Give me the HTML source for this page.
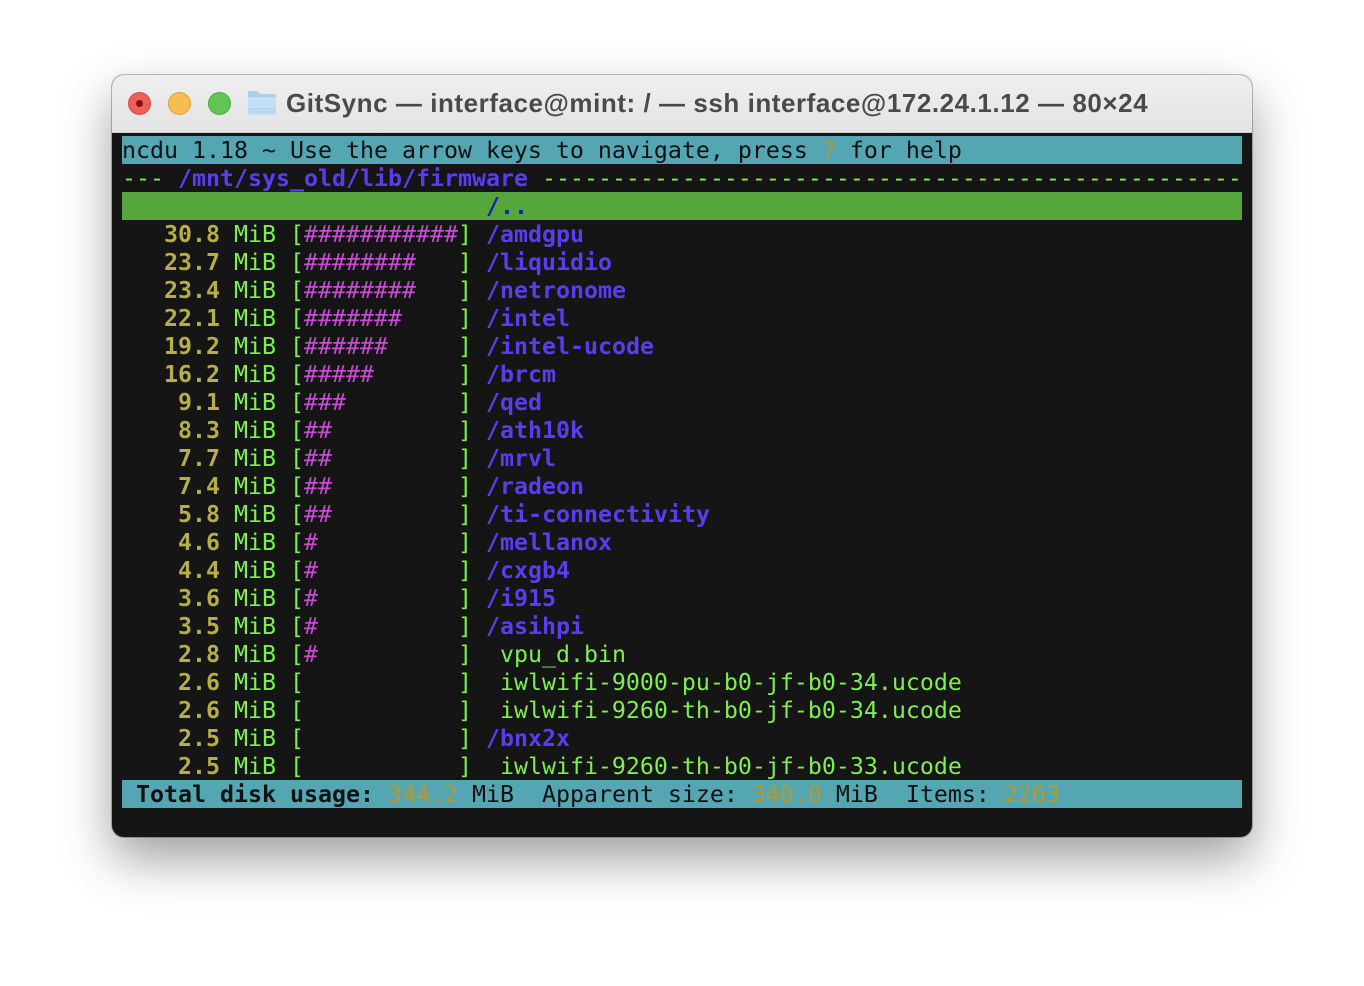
<!DOCTYPE html>
<html><head><meta charset="utf-8"><style>
html,body{margin:0;padding:0;background:#fff;width:1364px;height:986px;overflow:hidden}
.win{position:absolute;left:112px;top:75px;width:1140px;height:762px;border-radius:12px;background:#151515;box-shadow:0 22px 50px rgba(0,0,0,.38),0 0 0 1px rgba(0,0,0,.25);overflow:hidden}
.tb{position:absolute;left:0;top:0;width:1140px;height:57px;background:linear-gradient(#f0efef,#e4e3e3);border-bottom:1px solid #cfcfcf}
.dot{position:absolute;top:17px;width:23px;height:23px;border-radius:50%}
.title{position:absolute;left:174px;top:13px;font:bold 26px "Liberation Sans",sans-serif;color:#4a4a4a;white-space:nowrap;letter-spacing:0.55px}
.term{position:absolute;left:10px;top:61px;width:1120px;overflow:hidden;font-family:"DejaVu Sans Mono","Liberation Mono",monospace;font-size:23.25px}
.l{height:28px;line-height:30px;white-space:pre;color:#7ef04d;overflow:hidden}
.cy{background:#54a6b3;color:#111}
.gr{background:#55a63b}
.y{color:#b7ae48;font-weight:bold}
.b{color:#5a3df0;font-weight:bold}
.m{color:#c84bd6}
.db{color:#1d1fb8;font-weight:bold}
.yy{color:#b59a2a}
</style></head><body>
<div class="win">
<div class="tb">
<div class="dot" style="left:16px;background:#ee5f57;border:1px solid #d44a43;box-sizing:border-box"><div style="position:absolute;left:7px;top:7px;width:7px;height:7px;border-radius:50%;background:#7d1410"></div></div>
<div class="dot" style="left:56px;background:#f6be4f;border:1px solid #dba33b;box-sizing:border-box"></div>
<div class="dot" style="left:96px;background:#61c554;border:1px solid #4ea942;box-sizing:border-box"></div>
<svg style="position:absolute;left:135px;top:14px" width="30" height="27" viewBox="0 0 30 27"><path d="M1 4 Q1 2 3 2 H10 L13 5 H27 Q29 5 29 7 V24 Q29 26 27 26 H3 Q1 26 1 24 Z" fill="#a9cff0"/><path d="M1 8 H29 V24 Q29 26 27 26 H3 Q1 26 1 24 Z" fill="#c3def5"/><path d="M2 20 H28 M2 23 H28" stroke="#a9cbe8" stroke-width="1"/></svg>
<div class="title">GitSync — interface@mint: / — ssh interface@172.24.1.12 — 80×24</div>
</div>
<div class="term">
<div class="l cy">ncdu 1.18 ~ Use the arrow keys to navigate, press <span class="yy">?</span> for help</div>
<div class="l">--- <span class="b">/mnt/sys_old/lib/firmware</span> --------------------------------------------------</div>
<div class="l gr">                          <span class="db">/..</span></div>
<div class="l">   <span class="y">30.8</span> MiB [<span class="m">###########</span>] <span class="b">/amdgpu</span></div>
<div class="l">   <span class="y">23.7</span> MiB [<span class="m">########</span>   ] <span class="b">/liquidio</span></div>
<div class="l">   <span class="y">23.4</span> MiB [<span class="m">########</span>   ] <span class="b">/netronome</span></div>
<div class="l">   <span class="y">22.1</span> MiB [<span class="m">#######</span>    ] <span class="b">/intel</span></div>
<div class="l">   <span class="y">19.2</span> MiB [<span class="m">######</span>     ] <span class="b">/intel-ucode</span></div>
<div class="l">   <span class="y">16.2</span> MiB [<span class="m">#####</span>      ] <span class="b">/brcm</span></div>
<div class="l">    <span class="y">9.1</span> MiB [<span class="m">###</span>        ] <span class="b">/qed</span></div>
<div class="l">    <span class="y">8.3</span> MiB [<span class="m">##</span>         ] <span class="b">/ath10k</span></div>
<div class="l">    <span class="y">7.7</span> MiB [<span class="m">##</span>         ] <span class="b">/mrvl</span></div>
<div class="l">    <span class="y">7.4</span> MiB [<span class="m">##</span>         ] <span class="b">/radeon</span></div>
<div class="l">    <span class="y">5.8</span> MiB [<span class="m">##</span>         ] <span class="b">/ti-connectivity</span></div>
<div class="l">    <span class="y">4.6</span> MiB [<span class="m">#</span>          ] <span class="b">/mellanox</span></div>
<div class="l">    <span class="y">4.4</span> MiB [<span class="m">#</span>          ] <span class="b">/cxgb4</span></div>
<div class="l">    <span class="y">3.6</span> MiB [<span class="m">#</span>          ] <span class="b">/i915</span></div>
<div class="l">    <span class="y">3.5</span> MiB [<span class="m">#</span>          ] <span class="b">/asihpi</span></div>
<div class="l">    <span class="y">2.8</span> MiB [<span class="m">#</span>          ]  vpu_d.bin</div>
<div class="l">    <span class="y">2.6</span> MiB [           ]  iwlwifi-9000-pu-b0-jf-b0-34.ucode</div>
<div class="l">    <span class="y">2.6</span> MiB [           ]  iwlwifi-9260-th-b0-jf-b0-34.ucode</div>
<div class="l">    <span class="y">2.5</span> MiB [           ] <span class="b">/bnx2x</span></div>
<div class="l">    <span class="y">2.5</span> MiB [           ]  iwlwifi-9260-th-b0-jf-b0-33.ucode</div>
<div class="l cy"> <b>Total disk usage:</b> <span class="yy">344.2</span> MiB  Apparent size: <span class="yy">340.0</span> MiB  Items: <span class="yy">2263</span></div>
</div>
</div>
</body></html>
